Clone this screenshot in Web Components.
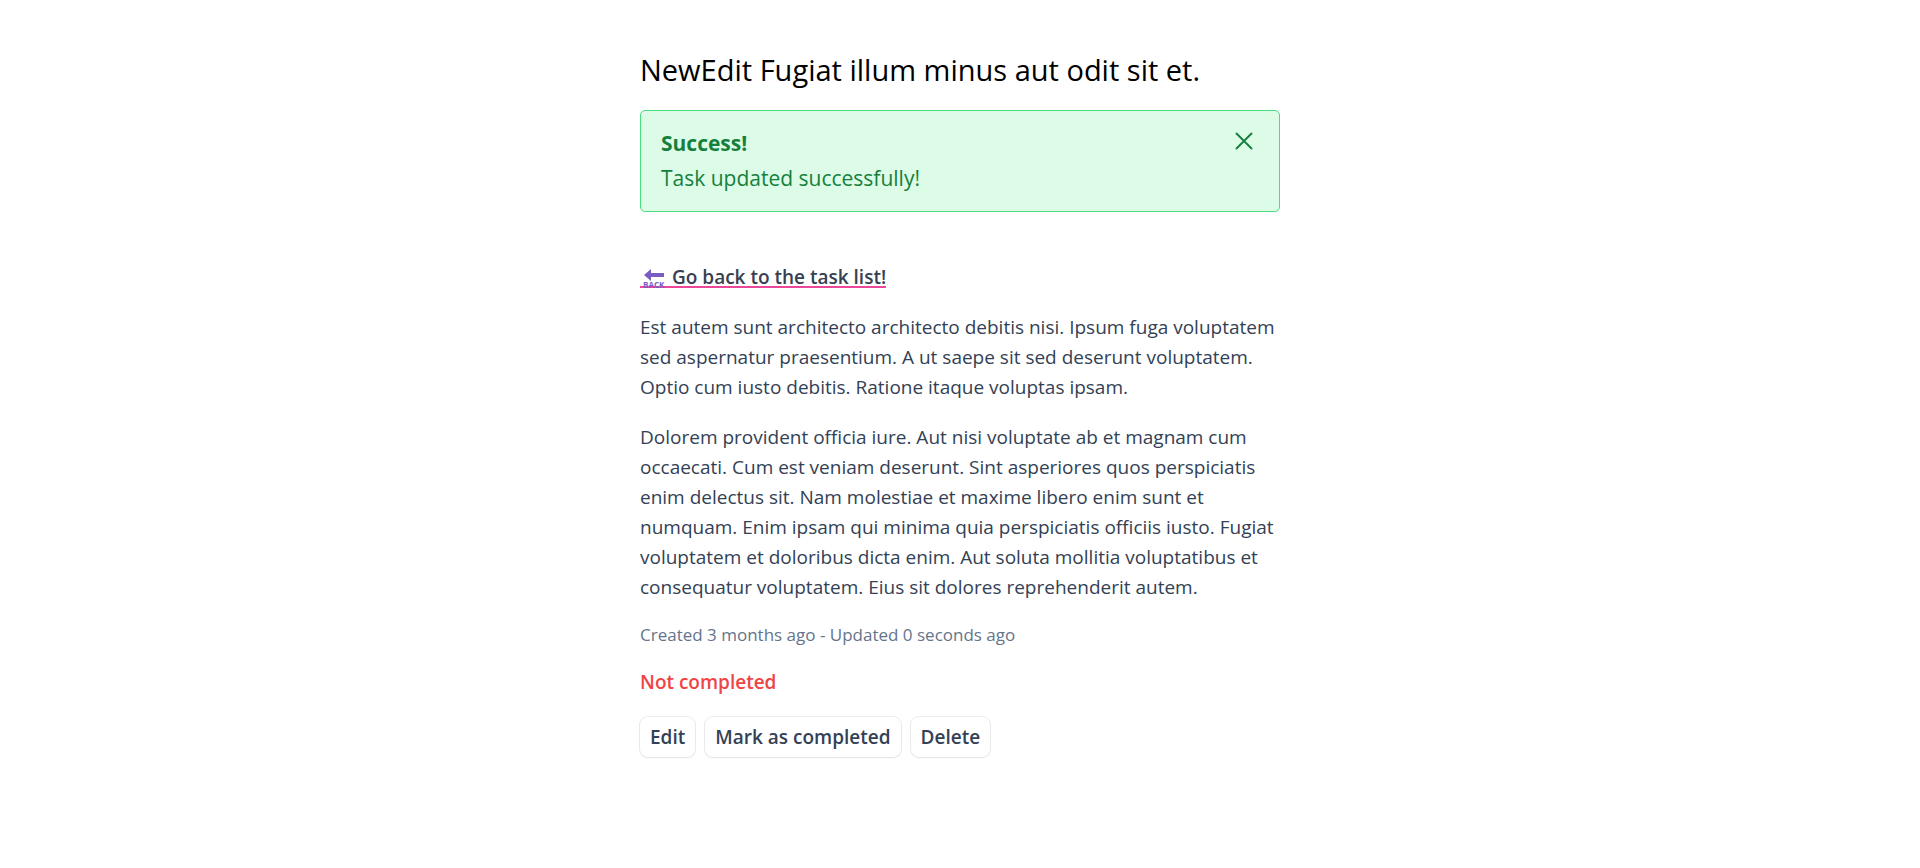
<!DOCTYPE html>
<html lang="en">
<head>
<meta charset="utf-8">
<meta name="viewport" content="width=device-width, initial-scale=1">
<title>Task</title>
<style>
  body { margin: 0; background: #fff; font-family: "Segoe UI", "Open Sans", "Noto Sans", sans-serif; font-size: 19px; line-height: 30px; }
</style>
</head>
<body>
<task-page>
  <span slot="title">NewEdit Fugiat illum minus aut odit sit et.</span>
  <flash-message heading="Success!">Task updated successfully!</flash-message>
  <back-link href="#tasks">Go back to the task list!</back-link>
  <task-text>Est autem sunt architecto architecto debitis nisi. Ipsum fuga voluptatem sed aspernatur praesentium. A ut saepe sit sed deserunt voluptatem. Optio cum iusto debitis. Ratione itaque voluptas ipsam.</task-text>
  <task-text>Dolorem provident officia iure. Aut nisi voluptate ab et magnam cum occaecati. Cum est veniam deserunt. Sint asperiores quos perspiciatis enim delectus sit. Nam molestiae et maxime libero enim sunt et numquam. Enim ipsam qui minima quia perspiciatis officiis iusto. Fugiat voluptatem et doloribus dicta enim. Aut soluta mollitia voluptatibus et consequatur voluptatem. Eius sit dolores reprehenderit autem.</task-text>
  <task-text kind="meta">Created 3 months ago - Updated 0 seconds ago</task-text>
  <task-text kind="status">Not completed</task-text>
  <task-actions>
    <task-button href="#edit">Edit</task-button>
    <task-button>Mark as completed</task-button>
    <task-button>Delete</task-button>
  </task-actions>
</task-page>
<script>
const define = (name, html, setup) => customElements.define(name, class extends HTMLElement {
  constructor() {
    super();
    this.attachShadow({ mode: "open" }).innerHTML = html;
  }
  connectedCallback() { if (setup) setup(this, this.shadowRoot); }
});

define("task-page", `
  <style>
    :host { display: block; box-sizing: border-box; max-width: 640px; margin: 50px auto; }
    h1 { margin: 0 0 20px; font-size: 29px; line-height: 40px; font-weight: 400; color: #000; }
    main { display: flex; flex-direction: column; gap: 20px; }
  </style>
  <h1><slot name="title"></slot></h1>
  <main><slot></slot></main>`);

define("flash-message", `
  <style>
    :host { display: flex; justify-content: space-between; align-items: flex-start; box-sizing: border-box;
      margin-bottom: 30px; padding: 15px 20px; border: 1px solid #4ade80; border-radius: 5px;
      background: #dcfce7; color: #15803d; font-size: 21px; line-height: 35px; }
    strong { display: block; font-weight: 700; }
    button { display: flex; margin: 0; padding: 0; border: 0; background: none; color: inherit; cursor: pointer; }
    svg { width: 30px; height: 30px; }
  </style>
  <div role="status"><strong></strong><slot></slot></div>
  <button type="button" aria-label="Close">
    <svg viewBox="0 0 24 24" fill="none" stroke="currentColor" stroke-width="1.5" stroke-linecap="round" stroke-linejoin="round"><path d="M6 18L18 6M6 6l12 12"/></svg>
  </button>`, (host, root) => {
    root.querySelector("strong").textContent = host.getAttribute("heading");
    root.querySelector("button").onclick = () => host.remove();
  });

define("back-link", `
  <style>
    :host { display: flex; }
    a { display: flex; color: #374151; font-weight: 600; text-decoration: none;
      background: linear-gradient(#ec4899, #ec4899) 0 24px / 100% 2px no-repeat; }
    svg { width: 27px; height: 30px; margin-right: 5px; fill: #7a5cc5; }
    text { font-size: 8px; font-weight: 700; }
  </style>
  <a href="#"><svg viewBox="0 0 27 30" aria-hidden="true">
      <path d="M4 13l7-6v4h13v4H11v4z"/>
      <text x="3" y="26">BACK</text>
    </svg><slot></slot></a>`, (host, root) => {
    root.querySelector("a").href = host.getAttribute("href");
  });

define("task-text", `
  <style>
    :host { display: block; color: #334155; }
    :host([kind="meta"]) { color: #64748b; font-size: 17px; line-height: 25px; }
    :host([kind="status"]) { color: #ef4444; font-weight: 600; }
    p { margin: 0; }
  </style>
  <p><slot></slot></p>`);

define("task-actions", `
  <style>:host { display: flex; flex-wrap: wrap; gap: 10px; }</style>
  <slot></slot>`);

define("task-button", `
  <style>
    :host { display: block; }
    a, button { display: block; margin: 0; padding: 5px 10px; border: 0; border-radius: 8px; background: #fff;
      color: #334155; font: inherit; font-weight: 600; text-align: center; text-decoration: none; cursor: pointer;
      box-shadow: 0 0 0 1px rgba(51,65,85,.1), 0 1px 2px rgba(0,0,0,.05); }
  </style>
  <button type="button"><slot></slot></button>`, (host, root) => {
    const href = host.getAttribute("href");
    if (!href) return;
    const link = document.createElement("a");
    link.href = href;
    link.append(document.createElement("slot"));
    root.querySelector("button").replaceWith(link);
  });
</script>
</body>
</html>
